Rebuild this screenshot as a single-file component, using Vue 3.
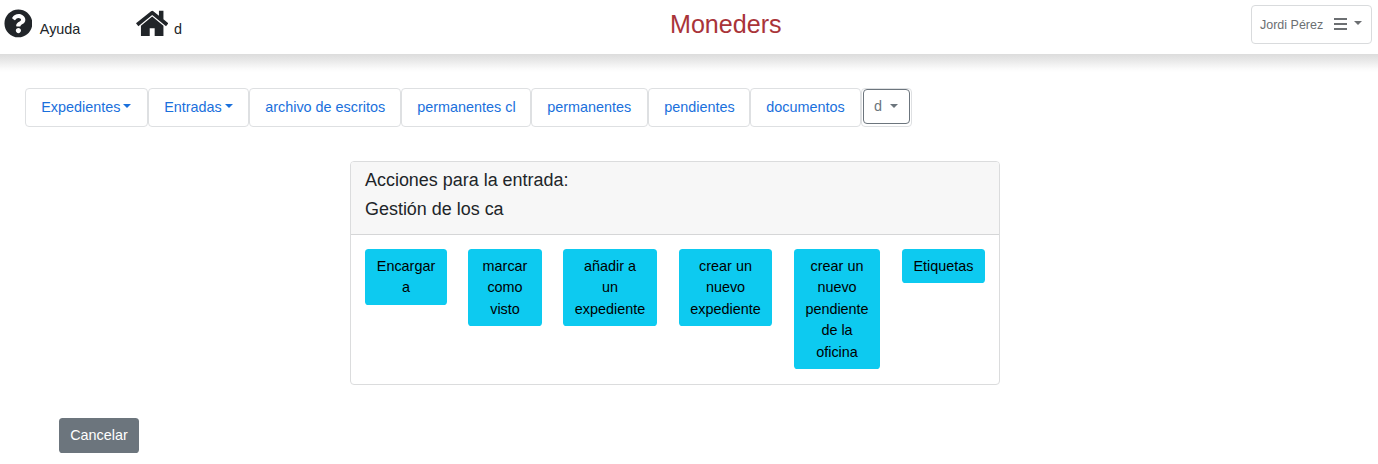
<script setup>
const navItems = [
  { label: 'Expedientes', width: 123, caret: true },
  { label: 'Entradas', width: 101, caret: true },
  { label: 'archivo de escritos', width: 152 },
  { label: 'permanentes cl', width: 130 },
  { label: 'permanentes', width: 117 },
  { label: 'pendientes', width: 102 },
  { label: 'documentos', width: 111 },
]
const actions = [
  { label: 'Encargar a', width: 82 },
  { label: 'marcar como visto', width: 74 },
  { label: 'añadir a\nun expediente', width: 94 },
  { label: 'crear un nuevo expediente', width: 93 },
  { label: 'crear un nuevo pendiente de la oficina', width: 86 },
  { label: 'Etiquetas', width: 83 },
]
</script>

<template>
  <div class="page">
    <header class="topbar">
      <div class="links">
        <a class="link help">
          <svg class="icon-help" viewBox="0 0 512 512"><path fill="currentColor" d="M504 256c0 136.997-111.043 248-248 248S8 392.997 8 256C8 119.083 119.043 8 256 8s248 111.083 248 248zM262.655 90c-54.497 0-89.255 22.957-116.549 63.758-3.536 5.286-2.353 12.415 2.715 16.258l34.699 26.31c5.205 3.947 12.621 3.008 16.665-2.122 17.864-22.658 30.113-35.797 57.303-35.797 20.429 0 45.698 13.148 45.698 32.958 0 14.976-12.363 22.667-32.534 33.976C247.128 238.528 216 254.941 216 296v4c0 6.627 5.373 12 12 12h56c6.627 0 12-5.373 12-12v-1.333c0-28.462 83.186-29.647 83.186-106.667 0-58.002-60.165-102-116.531-102zM256 338c-25.365 0-46 20.635-46 46 0 25.364 20.635 46 46 46s46-20.636 46-46c0-25.365-20.635-46-46-46z" /></svg>
          <span>Ayuda</span>
        </a>
        <a class="link">
          <svg class="icon-home" viewBox="0 0 576 512"><path fill="currentColor" d="M268 38Q288 24 308 38L408 120V32h80v150l88 73-42 52L288 106 42 307 0 255zM288 134L488 298V480H332V344H244V480H88V298z" /></svg>
          <span>d</span>
        </a>
      </div>
      <h1 class="title">Moneders</h1>
      <button class="user">
        <span>Jordi Pérez</span>
        <svg class="bars" viewBox="0 0 13 12"><path fill="currentColor" d="M0 0h13v2H0zM0 5h13v2H0zM0 10h13v2H0z" /></svg>
        <i class="caret"></i>
      </button>
    </header>
    <div class="shade"></div>

    <nav class="nav">
      <a v-for="item in navItems" :key="item.label" class="nav-item" :style="{ width: item.width + 'px' }">
        {{ item.label }}<i v-if="item.caret" class="caret"></i>
      </a>
      <div class="nav-last">
        <button class="drop">d<i class="caret"></i></button>
      </div>
    </nav>

    <section class="card">
      <div class="card-header">
        <div>Acciones para la entrada:</div>
        <div>Gestión de los ca</div>
      </div>
      <div class="card-body">
        <button v-for="a in actions" :key="a.label" class="action" :style="{ width: a.width + 'px' }">{{ a.label }}</button>
      </div>
    </section>

    <button class="cancel">Cancelar</button>
  </div>
</template>

<style>
body { margin: 0; background: #fff; }
</style>

<style scoped>
* { box-sizing: border-box; }
.page {
  height: 464px;
  overflow: hidden;
  font-family: "Liberation Sans", Arial, sans-serif;
  font-size: 14.4px;
  line-height: 21.6px;
  color: #212529;
}
button { font: inherit; margin: 0; cursor: pointer; }
.topbar {
  display: grid;
  grid-template-columns: 633px auto 1fr;
  height: 54px;
  background: #fff;
}
.shade {
  height: 18px;
  background: linear-gradient(#dcdcdc, #e8e8e8 35%, #fafafa 80%, #fff);
}
.links { display: flex; padding-left: 3.500px; }
.link { display: flex; align-items: flex-start; }
.link span { margin-top: 19px; }
.help { width: 132.500px; }
.icon-help { width: 28.800px; height: 28.800px; margin: 9px 7.500px 0 0; }
.icon-home { width: 32.4px; height: 28.8px; margin: 9px 5.600px 0 0; }
.title {
  margin: 9px 0 0;
  padding-left: 37px;
  font-size: 25.100px;
  line-height: 30px;
  font-weight: 400;
  color: #a93439;
}
.user {
  justify-self: end;
  display: flex;
  align-items: center;
  width: 121px;
  height: 39px;
  margin: 5px 6px 0 0;
  padding: 0 0 0 8px;
  border: 1px solid #d9dbdd;
  border-radius: 4px;
  background: #fff;
  color: #6c6f72;
  font-size: 12.5px;
}
.user span { padding-top: 2px; }
.bars { width: 13px; height: 12px; margin: -1px 7px 0 11px; }
.caret {
  display: inline-block;
  border: 4.300px solid transparent;
  border-top-color: currentColor;
  border-bottom: 0;
}
.user .caret { margin-top: -3px; }
.nav { display: flex; margin: 16px 0 0 25px; height: 39px; }
.nav-item, .nav-last {
  border: 1px solid #dee0e2;
  border-radius: 4px;
}
.nav-item {
  padding: 8px 0 0 15.200px;
  white-space: nowrap;
  color: #1a70dc;
}
.nav-item .caret { margin-left: 2.800px; vertical-align: 3.600px; }
.nav-last { width: 51px; padding: 0 1px; }
.drop {
  display: block;
  width: 47px;
  height: 35px;
  padding: 0 0 0 10px;
  border: 1px solid #6c757d;
  border-radius: 4px;
  background: #fff;
  color: #6c757d;
  text-align: left;
}
.drop .caret { margin-left: 8px; vertical-align: 3px; }
.card {
  width: 650px;
  height: 224px;
  margin: 34px 0 0 350px;
  border: 1px solid #dbdcdd;
  border-radius: 4px;
}
.card-header {
  height: 73px;
  padding: 4px 14px 0;
  border-bottom: 1px solid #d5d6d7;
  background: #f7f7f7;
  border-radius: 3px 3px 0 0;
  font-size: 17.950px;
  line-height: 29px;
}
.card-body {
  display: flex;
  gap: 21px;
  align-items: flex-start;
  padding: 14px 14px 0;
}
.action {
  flex: none;
  padding: 6.600px 11px 6.100px;
  border: 0;
  border-radius: 3.600px;
  background: #0dcaf0;
  color: #000;
  line-height: 21.5px;
  white-space: pre-line;
}
.action:nth-child(n + 4) { margin-left: 1px; }
.cancel {
  display: block;
  width: 80px;
  height: 35px;
  margin: 33px 0 0 59px;
  padding: 0;
  border: 0;
  border-radius: 3.600px;
  background: #6c757d;
  color: #fff;
}
</style>
